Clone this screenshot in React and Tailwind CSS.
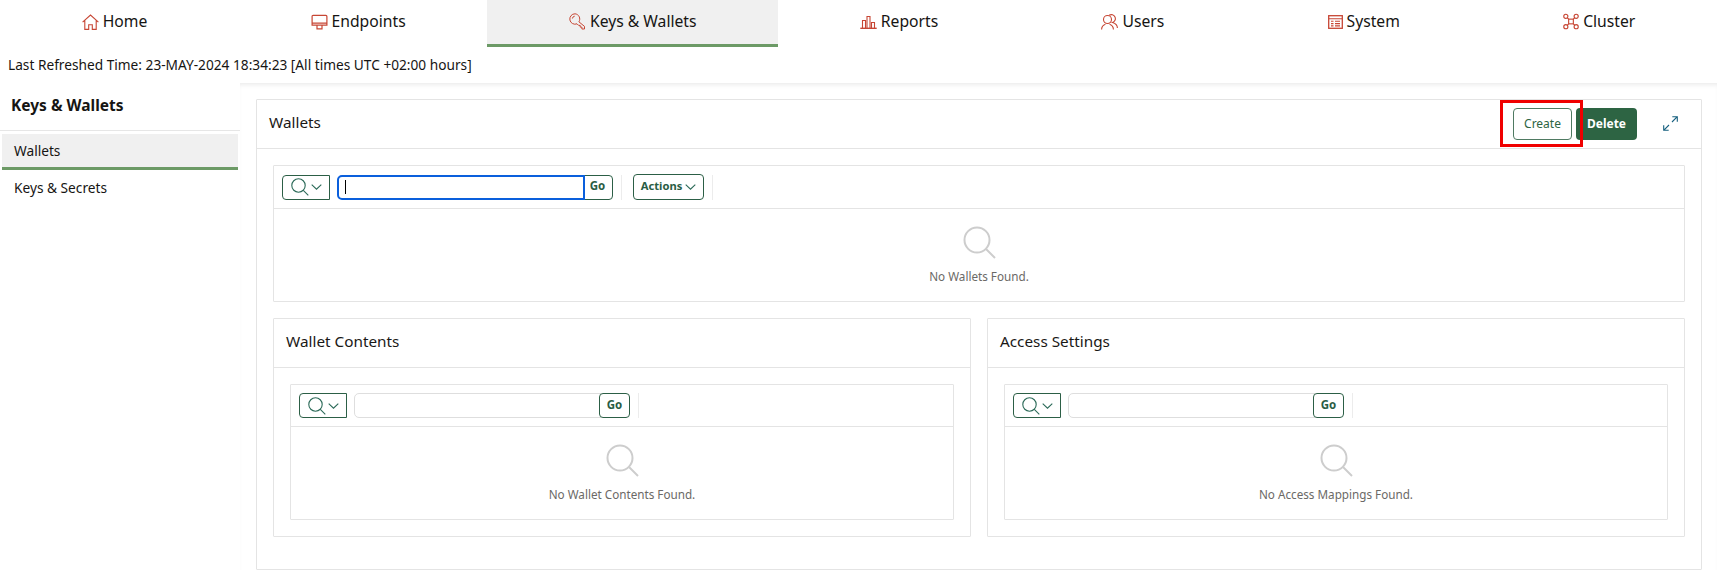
import React from 'react';

const HomeIcon = () => (
  <svg width="17" height="16" viewBox="0 0 17 16" fill="none" stroke="#c74634" strokeWidth="1.1">
    <path d="M.6 8.2 8.5 1l7.9 7.2M2.8 6.6v8.8h3.9v-4.6h3.6v4.6h3.9V6.6" />
  </svg>
);

const EndpointsIcon = () => (
  <svg width="17" height="16" viewBox="0 0 17 16" fill="none" stroke="#c74634" strokeWidth="1.2">
    <path d="M1.1 2.4a1 1 0 0 1 1-1h12.800a1 1 0 0 1 1 1v8.800H1.100zM1.100 9.200h14.800M6 11.200v3.600h5v-3.600" />
  </svg>
);

const KeyIcon = () => (
  <svg width="17" height="17" viewBox="0 0 17 17" fill="none" stroke="#c74634" strokeWidth="1">
    <path d="M6 .8a5.200 5.200 0 1 0 2 10l1.600 1.600h1.600v1.700h1.700V16h2.600v-2.600L9.900 8.800A5.200 5.200 0 0 0 6 .8z" />
    <path d="M3.400 5.500a2.600 2.600 0 0 1 2.300-2.300" />
  </svg>
);

const ReportsIcon = () => (
  <svg width="17" height="14" viewBox="0 0 17 14" fill="none" stroke="#c74634" strokeWidth="1.1">
    <path d="M.3 13.300h16.400" strokeWidth="1.4" />
    <path d="M2.500 13V5.500h3V13M7 13V1.500h3V13M11.500 13V7.500h3V13" />
  </svg>
);

const UsersIcon = () => (
  <svg width="17" height="16" viewBox="0 0 17 16" fill="none" stroke="#c74634" strokeWidth="1.1">
    <circle cx="6.500" cy="5.500" r="4" />
    <path d="M.6 15.500c0-3 1.900-4.600 3.800-5.300M8.600 10.200c1.900.7 3.800 2.300 3.800 5.300" />
    <path d="M8.200 1.300A4 4 0 1 1 11.500 8.500c2.400.7 4.900 2.400 4.900 5.500" />
  </svg>
);

const SystemIcon = () => (
  <svg width="15" height="14" viewBox="0 0 15 14" fill="none" stroke="#c74634">
    <rect x=".7" y=".7" width="13.600" height="12.600" strokeWidth="1.300" />
    <path d="M.7 3.700h13.600M3 6.300h2.500M7 6.300h5M3 8.600h2.500M7 8.600h5M3 10.900h2.500M7 10.900h5" strokeWidth="1.100" />
  </svg>
);

const ClusterIcon = () => (
  <svg width="16" height="17" viewBox="0 0 17 17" fill="none" stroke="#c74634" strokeWidth="1.200">
    <circle cx="3" cy="3" r="2.200" />
    <circle cx="14" cy="3" r="2.200" />
    <circle cx="3" cy="14" r="2.200" />
    <circle cx="14" cy="14" r="2.200" />
    <rect x="6" y="6" width="5" height="5" />
    <path d="m4.600 4.600 1.400 1.400M12.400 4.600 11 6M4.600 12.400 6 11M12.400 12.400 11 11" />
  </svg>
);

const ExpandIcon = () => (
  <svg width="15" height="15" viewBox="0 0 15 15" fill="none" stroke="#17607f" strokeWidth="1.100">
    <path d="M9.300.7h5v5M14.300.7 9 6M5.700 14.300h-5v-5M.7 14.300 6 9" />
  </svg>
);

const SearchIcon = () => (
  <svg width="18" height="18" viewBox="0 0 18 18" fill="none" stroke="#2b6a58" strokeWidth="1.100">
    <circle cx="7.500" cy="7.500" r="6.700" />
    <path d="m12.300 12.300 5 5" />
  </svg>
);

const EmptyIcon = () => (
  <svg width="33" height="33" viewBox="0 0 33 33" fill="none" stroke="#cdcdcd" strokeWidth="2">
    <circle cx="14" cy="14" r="12.500" />
    <path d="m23 23 9 9" />
  </svg>
);

const Chevron = () => (
  <svg width="11" height="6" viewBox="0 0 11 6" fill="none" stroke="#2b6a58" strokeWidth="1.100">
    <path d="m.7.700 4.800 4.500 4.800-4.500" />
  </svg>
);

const tabs = [
  { name: 'Home', icon: <HomeIcon /> },
  { name: 'Endpoints', icon: <EndpointsIcon /> },
  { name: 'Keys & Wallets', icon: <KeyIcon />, active: true },
  { name: 'Reports', icon: <ReportsIcon /> },
  { name: 'Users', icon: <UsersIcon /> },
  { name: 'System', icon: <SystemIcon /> },
  { name: 'Cluster', icon: <ClusterIcon /> },
];

const Report = ({ empty, focused = false }) => (
  <div className={`border border-[#e4e4e4] rounded-[1px] ${focused ? 'h-[137px]' : 'h-[136px]'}`}>
    <div className={`border-b border-[#e4e4e4] flex items-center pl-[8px] ${focused ? 'h-[43px]' : 'h-[42px]'}`}>
      <button className="w-[48px] h-[25px] border border-[#2c5f46] rounded-l-[4px] flex items-center justify-center gap-[2px]">
        <SearchIcon />
        <Chevron />
      </button>
      <div className="flex w-[276px] ml-[7px]">
        {focused ? (
          <div className="relative z-10 w-[248px] h-[25px] border-2 border-[#0a5fdc] rounded-l-[5px] bg-white flex items-center pl-[6px]">
            <div className="w-px h-[14px] bg-black" />
          </div>
        ) : (
          <input className="w-[248px] h-[25px] border border-[#dedede] rounded-l-[5px] bg-white" />
        )}
        <button className={`relative w-[31px] -ml-[3px] h-[25px] border border-[#2c5f46] bg-white pb-[2px] text-[11.5px] font-bold text-[#2a5d44] ${focused ? 'rounded-r-[4px]' : 'rounded-[4px]'}`}>
          Go
        </button>
      </div>
      <div className="w-px h-[25px] bg-[#ececec] ml-[8px]" />
      {focused && (
        <>
          <button className="ml-[11px] w-[71px] h-[26px] border border-[#2c5f46] rounded-[4px] flex items-center justify-center gap-[3px] pb-[1px] text-[11.200px] font-bold text-[#2a5d44]">
            Actions
            <Chevron />
          </button>
          <div className="w-px h-[25px] bg-[#ececec] ml-[8px]" />
        </>
      )}
    </div>
    <div className="flex flex-col items-center pt-[17px]">
      <EmptyIcon />
      <p className="mt-[8px] text-[11.700px] leading-[18px] text-[#6b6966]">{empty}</p>
    </div>
  </div>
);

const SubPanel = ({ title, empty }) => (
  <section className="h-[219px] border border-[#e4e4e4] rounded-[1px]">
    <h2 className="h-[49px] border-b border-[#e4e4e4] flex items-center pl-[12px] pb-[3px] text-[15.300px] text-[#1a1816]">{title}</h2>
    <div className="px-[16px] pt-[16px]">
      <Report empty={empty} />
    </div>
  </section>
);

export default function App() {
  return (
    <div className="w-[1717px] h-[587px] overflow-hidden bg-white text-[#161513] font-['Noto_Sans','Liberation_Sans',sans-serif]">
      <nav className="flex h-[47px]">
        {tabs.map((tab) => (
          <a
            key={tab.name}
            className={`flex-auto flex items-center justify-center gap-[4px] text-[15.700px] ${tab.active ? 'pb-[1px] bg-[#f0f0f0] border-b-[3px] border-[#6c9a66]' : 'pb-[4px]'}`}
          >
            {tab.icon}
            {tab.name}
          </a>
        ))}
      </nav>
      <div className="h-[36px] flex items-center pl-[8px] text-[13.700px]">
        Last Refreshed Time: 23-MAY-2024 18:34:23 [All times UTC +02:00 hours]
      </div>

      <div className="flex">
        <aside className="w-[240px]">
          <h1 className="h-[48px] border-b border-[#e6e6e6] pl-[11px] pb-[2px] flex items-center text-[15.500px] font-bold">Keys &amp; Wallets</h1>
          <ul className="pt-[3px] text-[13.700px]">
            <li className="mx-[2px] h-[36px] pl-[12px] pt-[2px] flex items-center bg-[#f0f0f0] border-b-[3px] border-[#6c9a66]">Wallets</li>
            <li className="mx-[2px] h-[36px] pl-[12px] flex items-center">Keys &amp; Secrets</li>
          </ul>
        </aside>

        <main className="flex-1 pl-[16px] pr-[15px] pt-[16px] shadow-[inset_0_4px_4px_-2px_rgba(0,0,0,0.08)]">
          <section className="h-[471px] border border-[#e4e4e4] rounded-[1px]">
            <div className="h-[49px] border-b border-[#e4e4e4] flex items-center pl-[12px]">
              <h2 className="flex-1 pb-[3px] text-[15.300px] text-[#1a1816]">Wallets</h2>
              <div className="relative">
                <button className="w-[59px] h-[32px] border border-[#4f7a62] rounded-[4px] text-[12px] text-[#2d6443]">Create</button>
                <div className="absolute -left-[13px] -right-[11px] -top-[8px] -bottom-[7px] border-[3px] border-[#f00000] pointer-events-none" />
              </div>
              <button className="ml-[4px] w-[61px] h-[32px] bg-[#2d6443] rounded-[4px] text-[12px] font-bold text-white">Delete</button>
              <div className="ml-[26px] mr-[23px] flex pb-[2px]">
                <ExpandIcon />
              </div>
            </div>
            <div className="px-[16px] pt-[16px]">
              <Report empty="No Wallets Found." focused />
              <div className="grid grid-cols-2 gap-[16px] mt-[16px]">
                <SubPanel title="Wallet Contents" empty="No Wallet Contents Found." />
                <SubPanel title="Access Settings" empty="No Access Mappings Found." />
              </div>
            </div>
          </section>
        </main>
      </div>
    </div>
  );
}
